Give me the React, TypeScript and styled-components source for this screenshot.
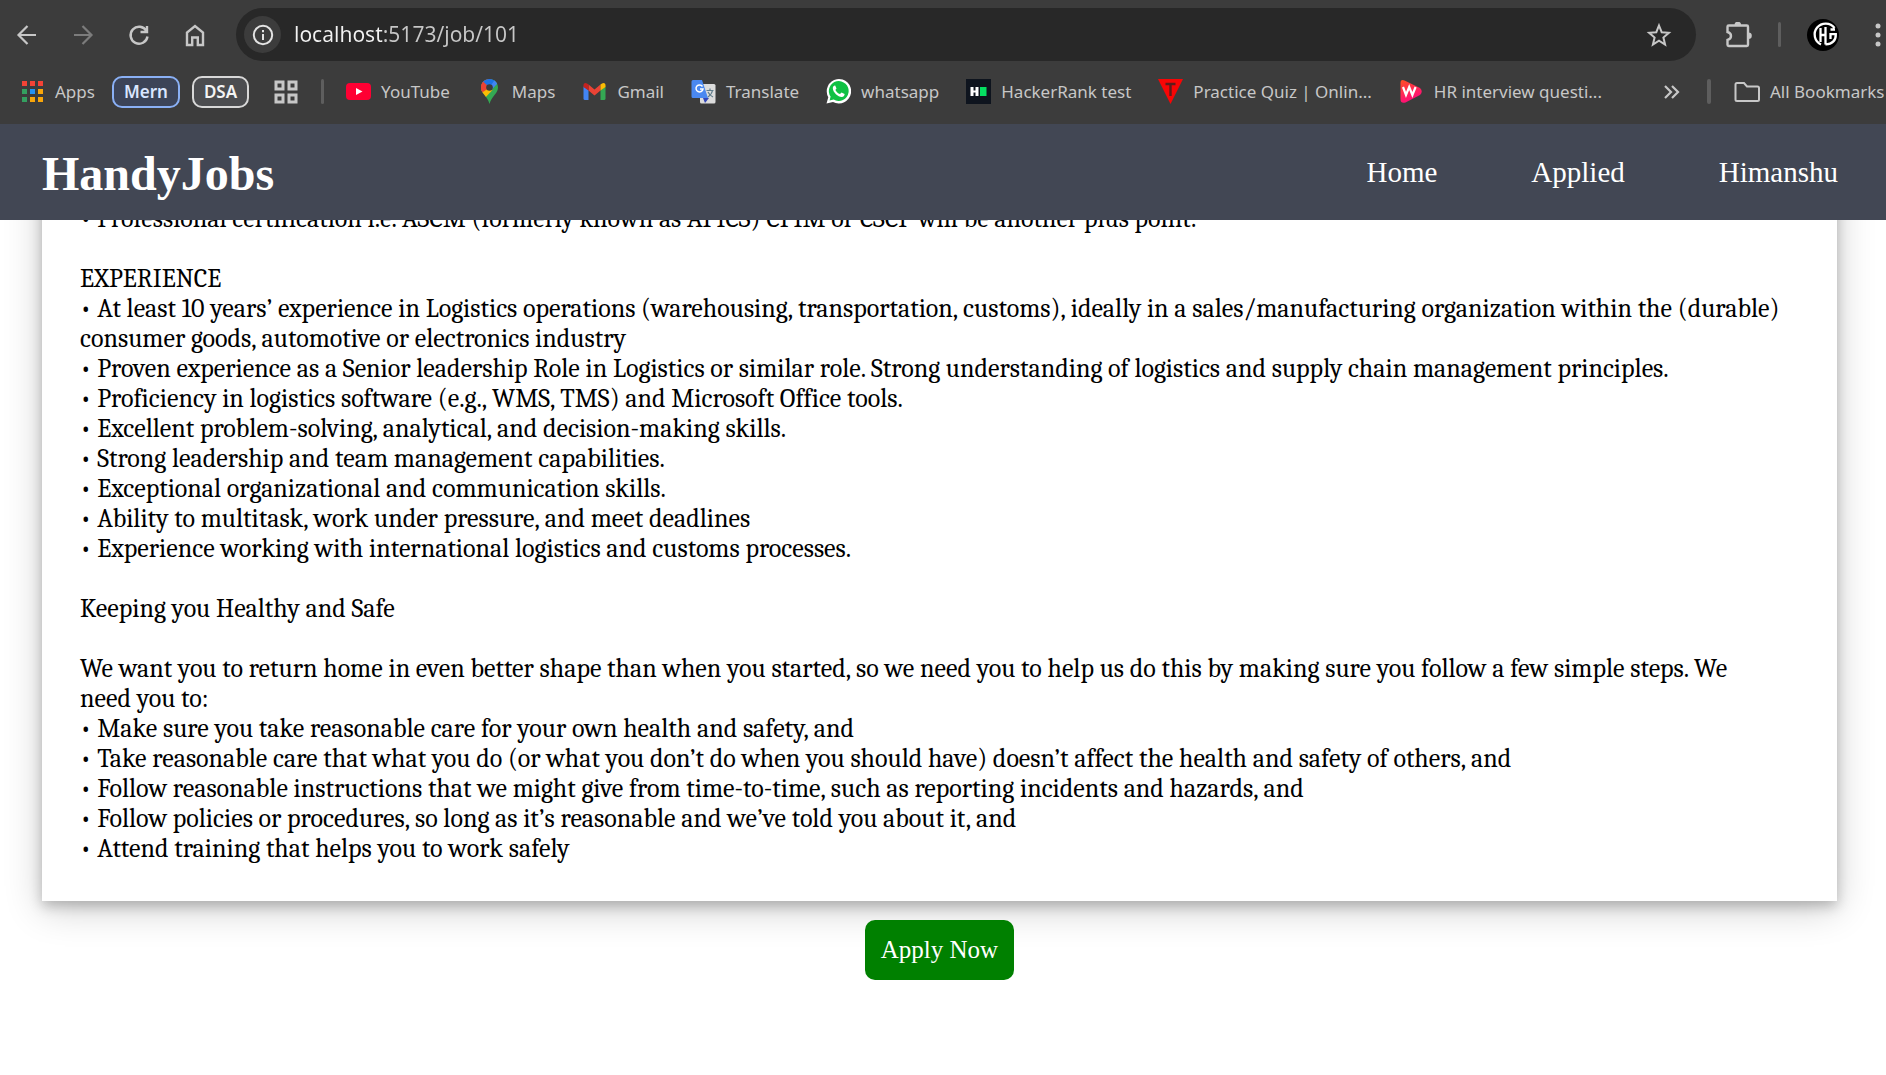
import React from "react";
import styled, { createGlobalStyle } from "styled-components";

const ui = `"Segoe UI", "Noto Sans", "Open Sans", sans-serif`;
const serif = `"Liberation Serif", "Times New Roman", serif`;
const bookSerif = `Cambria, Caladea, "Liberation Serif", serif`;

const GlobalStyle = createGlobalStyle`
  *, *::before, *::after { box-sizing: border-box; }
  body { margin: 0; background: #fff; overflow: hidden; }
  button { font: inherit; color: inherit; background: none; border: 0; padding: 0; cursor: pointer; }
  a { color: inherit; text-decoration: none; }
  svg { display: block; flex: none; }
`;

const Page = styled.div`
  min-height: 100vh;
  display: flex;
  flex-direction: column;
`;

/* ---------- browser bar ---------- */

const Browser = styled.div`
  height: 124px;
  flex: none;
  background: #3c3c3c;
  color: #c7c7c7;
  font-family: ${ui};
  overflow: hidden;
`;

const Toolbar = styled.div`
  display: flex;
  align-items: center;
  padding: 8px 0 0 14px;
`;

const NavButtons = styled.div`
  display: flex;
  gap: 30px;
  margin-right: 28px;
`;

const IconButton = styled.button<{ $dim?: boolean }>`
  width: 26px;
  height: 26px;
  display: grid;
  place-items: center;
  flex: none;
  color: ${(p) => (p.$dim ? "#7c7c7c" : "#c7c7c7")};
`;

const AddressBar = styled.div`
  flex: 1;
  height: 53px;
  display: flex;
  align-items: center;
  gap: 13px;
  padding: 0 24px 0 8px;
  border-radius: 27px;
  background: #282828;
`;

const SiteInfo = styled.button`
  width: 37px;
  height: 37px;
  border-radius: 50%;
  background: #3c3c3c;
  color: #e3e3e3;
  display: grid;
  place-items: center;
  flex: none;
`;

const UrlInput = styled.input`
  flex: 1;
  min-width: 0;
  border: 0;
  outline: 0;
  padding: 0 0 2px;
  height: 36px;
  font: 21px ${ui};
  color: transparent;
  background: linear-gradient(90deg, #f2f2f2 88px, #c7c7c7 88px);
  -webkit-background-clip: text;
  background-clip: text;
`;

const ToolbarEnd = styled.div`
  width: 190px;
  flex: none;
  display: flex;
  align-items: center;
  gap: 26px;
  padding-left: 30px;
`;

const Divider = styled.span<{ $w?: number }>`
  width: ${(p) => p.$w ?? 3}px;
  height: 25px;
  border-radius: 2px;
  background: #5e5e5e;
  flex: none;
`;

const Avatar = styled.button`
  width: 32px;
  height: 32px;
  flex: none;
`;

const Bookmarks = styled.nav`
  display: flex;
  align-items: center;
  height: 61px;
  padding-left: 20px;
  font-size: 17px;
  line-height: 24px;
  white-space: nowrap;
`;

const Links = styled.div`
  display: flex;
  align-items: center;
  flex: 1;
  gap: 27px;
  padding-left: 22px;
`;

const Bookmark = styled.a`
  display: flex;
  align-items: center;
  gap: 10px;
  flex: none;
`;

const Group = styled.button<{ $blue?: boolean }>`
  height: 32px;
  padding: 0 10px;
  margin-left: ${(p) => (p.$blue ? 17 : 12)}px;
  border: 2px solid ${(p) => (p.$blue ? "#8ab0f5" : "#d8d8d8")};
  border-radius: 10px;
  background: ${(p) => (p.$blue ? "#3c4458" : "#4c4d50")};
  color: ${(p) => (p.$blue ? "#d9e6ff" : "#f4f4f4")};
  font-weight: 600;
`;

const GridButton = styled(IconButton)`
  margin: 0 22px 0 24px;
`;

const BookmarksEnd = styled.div`
  width: 228px;
  flex: none;
  display: flex;
  align-items: center;
  gap: 23px;
`;

/* ---------- site ---------- */

const Header = styled.header`
  position: relative;
  z-index: 1;
  height: 96px;
  flex: none;
  display: flex;
  align-items: center;
  justify-content: space-between;
  padding: 0 48px 0 42px;
  background: #424754;
  color: #fff;
  font-family: ${serif};
`;

const Logo = styled.h1`
  margin: 0;
  padding-top: 3px;
  font-size: 48px;
  line-height: 56px;
  font-weight: 700;
`;

const Menu = styled.nav`
  display: flex;
  gap: 94px;
  font-size: 29px;
  line-height: 34px;
`;

const Main = styled.main`
  flex: 1;
  overflow: hidden;
  display: flex;
  flex-direction: column;
  align-items: center;
  gap: 19px;
  padding: 0 49px 40px 42px;
  font-family: ${serif};
`;

const Card = styled.article`
  width: 100%;
  margin-top: -55px;
  padding: 39px 55px 37px 38px;
  background: #fff;
  color: #000;
  box-shadow: 0 5px 12px rgba(0, 0, 0, 0.22), 0 8px 36px rgba(0, 0, 0, 0.2);
  font-family: ${bookSerif};
  font-size: 26px;
  line-height: 30px;
`;

const Line = styled.p`
  margin: 0;
  min-height: 30px;
`;

const Apply = styled.button`
  position: relative;
  height: 60px;
  padding: 0 16px;
  border-radius: 10px;
  background: #008000;
  color: #fff;
  font-size: 25px;
`;

const lines = [
  "• Professional certification i.e. ASCM (formerly known as APICS) CPIM or CSCP will be another plus point.",
  "",
  "EXPERIENCE",
  "• At least 10 years’ experience in Logistics operations (warehousing, transportation, customs), ideally in a sales/manufacturing organization within the (durable) consumer goods, automotive or electronics industry",
  "• Proven experience as a Senior leadership Role in Logistics or similar role. Strong understanding of logistics and supply chain management principles.",
  "• Proficiency in logistics software (e.g., WMS, TMS) and Microsoft Office tools.",
  "• Excellent problem-solving, analytical, and decision-making skills.",
  "• Strong leadership and team management capabilities.",
  "• Exceptional organizational and communication skills.",
  "• Ability to multitask, work under pressure, and meet deadlines",
  "• Experience working with international logistics and customs processes.",
  "",
  "Keeping you Healthy and Safe",
  "",
  "We want you to return home in even better shape than when you started, so we need you to help us do this by making sure you follow a few simple steps. We need you to:",
  "• Make sure you take reasonable care for your own health and safety, and",
  "• Take reasonable care that what you do (or what you don’t do when you should have) doesn’t affect the health and safety of others, and",
  "• Follow reasonable instructions that we might give from time-to-time, such as reporting incidents and hazards, and",
  "• Follow policies or procedures, so long as it’s reasonable and we’ve told you about it, and",
  "• Attend training that helps you to work safely",
];

/* ---------- icons ---------- */

const Stroke = ({ d, w = 2, size = 26 }: { d: string; w?: number; size?: number }) => (
  <svg width={size} height={size} viewBox="0 0 26 26" fill="none" stroke="currentColor" strokeWidth={w}>
    <path d={d} />
  </svg>
);

const AppsIcon = () => {
  const colors = ["#f44336", "#f44336", "#f44336", "#34a060", "#2492f4", "#f9a60a", "#34a060", "#f9a60a", "#f9a60a"];
  return (
    <svg width="25" height="25" viewBox="0 0 25 25">
      {colors.map((c, i) => (
        <rect key={i} x={2 + (i % 3) * 8} y={2 + Math.floor(i / 3) * 8} width="5" height="5" fill={c} />
      ))}
    </svg>
  );
};

const YouTubeIcon = () => (
  <svg width="25" height="25" viewBox="0 0 25 25">
    <rect y="4" width="25" height="17" rx="4" fill="#ff0033" />
    <path d="M10 9l6.500 3.500L10 16z" fill="#fff" />
  </svg>
);

const MapsIcon = () => (
  <svg width="25" height="25" viewBox="0 0 25 25">
    <defs>
      <clipPath id="pin">
        <path d="M12.500 0C7.500 0 4 3.800 4 8.500c0 3 1.500 5 3.500 7.500 2.500 3.200 3.800 5 5 9 1.200-4 2.500-5.800 5-9 2-2.500 3.500-4.500 3.500-7.500C21 3.800 17.500 0 12.500 0z" />
      </clipPath>
    </defs>
    <g clipPath="url(#pin)">
      <rect width="25" height="25" fill="#34a853" />
      <path d="M0 18L20-6H0z" fill="#ea4335" />
      <path d="M4 3L12.500 9 22-2H6z" fill="#1a73e8" />
      <path d="M12.500 8.500L19-1l4 3-4 4-6.500 7z" fill="#4285f4" />
      <path d="M2 14l7.500-8 6 5L6 21z" fill="#fbbc04" />
      <path d="M2 2l4 .5 6.500 6L4.500 14z" fill="#ea4335" />
    </g>
    <circle cx="12.500" cy="8.500" r="3.300" fill="#3c3c3c" />
  </svg>
);

const GmailIcon = () => (
  <svg width="25" height="25" viewBox="0 0 25 25">
    <path d="M1.500 7.500L6.500 11v10H3a1.500 1.500 0 0 1-1.500-1.500z" fill="#4285f4" />
    <path d="M23.500 7.500L18.500 11v10H22a1.500 1.500 0 0 0 1.500-1.500z" fill="#34a853" />
    <path d="M6.500 5.500l6 5 6-5V11.500l-6 5-6-5z" fill="#ea4335" />
    <path d="M1.500 8V6c0-2 2-2.700 3.500-1.600L6.500 5.500v6z" fill="#c5221f" />
    <path d="M23.500 8V6c0-2-2-2.700-3.500-1.600L18.500 5.500v6z" fill="#fbbc04" />
  </svg>
);

const TranslateIcon = () => (
  <svg width="25" height="25" viewBox="0 0 25 25">
    <rect x="9" y="5" width="15.500" height="19.500" rx="1.500" fill="#dcdcdc" />
    <path d="M12 19h6l-4 5z" fill="#3246b8" />
    <path d="M2 1h9l6 18H2a1.500 1.500 0 0 1-1.500-1.500v-15A1.500 1.500 0 0 1 2 1z" fill="#4a88f0" />
    <path d="M11.500 7.500A3.500 3.500 0 1 0 12 10H9" fill="none" stroke="#fff" strokeWidth="1.500" />
    <path d="M15.500 11.500h7M19 9.500v2M21.500 11.500c-.5 3-2.500 5-4.500 6.500M17 13c1 2 3 4 5 5" fill="none" stroke="#607d8b" strokeWidth="1.200" />
  </svg>
);

const WhatsAppIcon = () => (
  <svg width="25" height="25" viewBox="0 0 25 25">
    <path d="M.5 24.500l1.800-6.300A12.200 12.200 0 1 1 7 22.900z" fill="#fff" />
    <path d="M3.600 21.500l1-3.900A9.900 9.900 0 1 1 7.700 20.500z" fill="#0fc143" />
    <path d="M9.200 6.500c-.5-.4-2.500.5-2.400 2.800.2 4.200 5.300 8.900 8.900 8.800 2-.1 3-1.600 2.900-3l-3.100-1.700-1.500 1.700c-2-.7-3.700-2.300-4.600-4.200l1.100-1.500z" fill="#fff" />
  </svg>
);

const HackerRankIcon = () => (
  <svg width="25" height="25" viewBox="0 0 25 25">
    <rect width="25" height="25" fill="#0e141e" />
    <path d="M4.500 8h3v3.500h2V8h3v9h-3v-3.500h-2V17h-3z" fill="#fff" />
    <rect x="14" y="8" width="6.500" height="9" fill="#05df62" />
  </svg>
);

const QuizIcon = () => (
  <svg width="25" height="25" viewBox="0 0 25 25">
    <path d="M0 0h25L12.500 25z" fill="#f80505" />
    <path d="M7.500 5h10M12.500 4v13" stroke="#5f1c1c" strokeWidth="2.400" />
  </svg>
);

const InterviewIcon = () => (
  <svg width="25" height="25" viewBox="0 0 25 25">
    <defs>
      <linearGradient id="play" x2="0.4" y2="1">
        <stop offset="0" stopColor="#ff5023" />
        <stop offset="1" stopColor="#ff0a7c" />
      </linearGradient>
    </defs>
    <path d="M1.500 4Q1.500 0 5.500 1.500L21 9Q24.500 12.500 21 16L6.500 23.500Q1.500 25 1.500 20z" fill="url(#play)" />
    <path d="M4 8l3 8 3.200-8 3.200 8 3.200-8" fill="none" stroke="#fff" strokeWidth="2.200" />
  </svg>
);

const bookmarks: [string, () => React.JSX.Element][] = [
  ["YouTube", YouTubeIcon],
  ["Maps", MapsIcon],
  ["Gmail", GmailIcon],
  ["Translate", TranslateIcon],
  ["whatsapp", WhatsAppIcon],
  ["HackerRank test", HackerRankIcon],
  ["Practice Quiz | Onlin...", QuizIcon],
  ["HR interview questi...", InterviewIcon],
];

const BrowserBar = () => (
  <Browser>
    <Toolbar>
      <NavButtons>
        <IconButton aria-label="Back"><Stroke d="M22 13H5M13.500 4L4.500 13l9 9" w={2.2} /></IconButton>
        <IconButton aria-label="Forward" $dim><Stroke d="M4 13h17M12.500 4l9 9-9 9" w={2.2} /></IconButton>
        <IconButton aria-label="Reload"><Stroke d="M20.500 9A8.500 8.500 0 1 0 21.500 14.500M21 4V10H14.500" w={2.400} /></IconButton>
        <IconButton aria-label="Home"><Stroke d="M5 23V10.500L13 4l8 6.500V23h-5.200v-7.500h-5.600V23z" w={2.400} /></IconButton>
      </NavButtons>
      <AddressBar>
        <SiteInfo aria-label="Site information">
          <svg width="22" height="22" viewBox="0 0 22 22" fill="none" stroke="currentColor" strokeWidth="2">
            <circle cx="11" cy="11" r="9.200" />
            <path d="M11 10v6M11 6v2.200" />
          </svg>
        </SiteInfo>
        <UrlInput aria-label="Address" defaultValue="localhost:5173/job/101" spellCheck={false} />
        <IconButton aria-label="Bookmark this page">
          <Stroke d="M13 3.500l2.700 6.700 7.200.6-5.500 4.700 1.700 7L13 18.700l-6.100 3.800 1.700-7-5.500-4.700 7.200-.6z" />
        </IconButton>
      </AddressBar>
      <ToolbarEnd>
        <IconButton aria-label="Extensions">
          <svg width="26" height="26" viewBox="0 0 26 26" fill="none" stroke="currentColor" strokeWidth="2.400">
            <path d="M1.500 4.700Q1.500 3.500 2.700 3.500h18.100Q22 3.500 22 4.700V22.800Q22 24 20.800 24H2.700Q1.500 24 1.500 22.800V18Q5 17 5 14T1.500 10z" />
            <path d="M8.500 3a3.300 3.300 0 0 1 6.600 0zM22.500 10.500a3.300 3.300 0 0 1 0 6.600z" fill="currentColor" stroke="none" />
          </svg>
        </IconButton>
        <Divider />
        <Avatar aria-label="Profile">
          <svg width="32" height="32" viewBox="0 0 32 32" fill="none" stroke="#fff" strokeWidth="2.300">
            <circle cx="16" cy="16" r="16" fill="#000" stroke="none" />
            <path d="M27.500 9A11 11 0 1 0 14 25.500M13.500 9v14M18.500 8v17.500M13.500 16h5M18.500 25.300C25 25.500 29 21.500 28.800 15.200H23.500V20M23.500 10.500H28" />
          </svg>
        </Avatar>
        <IconButton aria-label="Menu">
          <svg width="6" height="24" viewBox="0 0 6 24" fill="currentColor">
            <circle cx="3" cy="3" r="2.500" />
            <circle cx="3" cy="12" r="2.500" />
            <circle cx="3" cy="21" r="2.500" />
          </svg>
        </IconButton>
      </ToolbarEnd>
    </Toolbar>
    <Bookmarks aria-label="Bookmarks">
      <Bookmark href="#apps"><AppsIcon />Apps</Bookmark>
      <Group $blue>Mern</Group>
      <Group>DSA</Group>
      <GridButton aria-label="Tab groups">
        <Stroke d="M3 3h7v7h-7zM16 3h7v7h-7zM3 16h7v7h-7zM16 16h7v7h-7z" w={3} />
      </GridButton>
      <Divider />
      <Links>
        {bookmarks.map(([label, Icon]) => (
          <Bookmark key={label} href="#bookmark"><Icon />{label}</Bookmark>
        ))}
      </Links>
      <BookmarksEnd>
        <IconButton aria-label="More bookmarks"><Stroke d="M7 7l6 6-6 6M14 7l6 6-6 6" w={2.200} /></IconButton>
        <Divider $w={4} />
        <Bookmark href="#all">
          <Stroke d="M1.500 5.500Q1.500 4 3 4h7l3 3.500h10.500Q25 7.500 25 9v11.500Q25 22 23.500 22H3Q1.500 22 1.500 20.500z" />
          All Bookmarks
        </Bookmark>
      </BookmarksEnd>
    </Bookmarks>
  </Browser>
);

export default function App() {
  return (
    <Page>
      <GlobalStyle />
      <BrowserBar />
      <Header>
        <Logo>HandyJobs</Logo>
        <Menu>
          <a href="#home">Home</a>
          <a href="#applied">Applied</a>
          <a href="#profile">Himanshu</a>
        </Menu>
      </Header>
      <Main>
        <Card>
          {lines.map((text, i) => (
            <Line key={i}>{text}</Line>
          ))}
        </Card>
        <Apply>Apply Now</Apply>
      </Main>
    </Page>
  );
}
